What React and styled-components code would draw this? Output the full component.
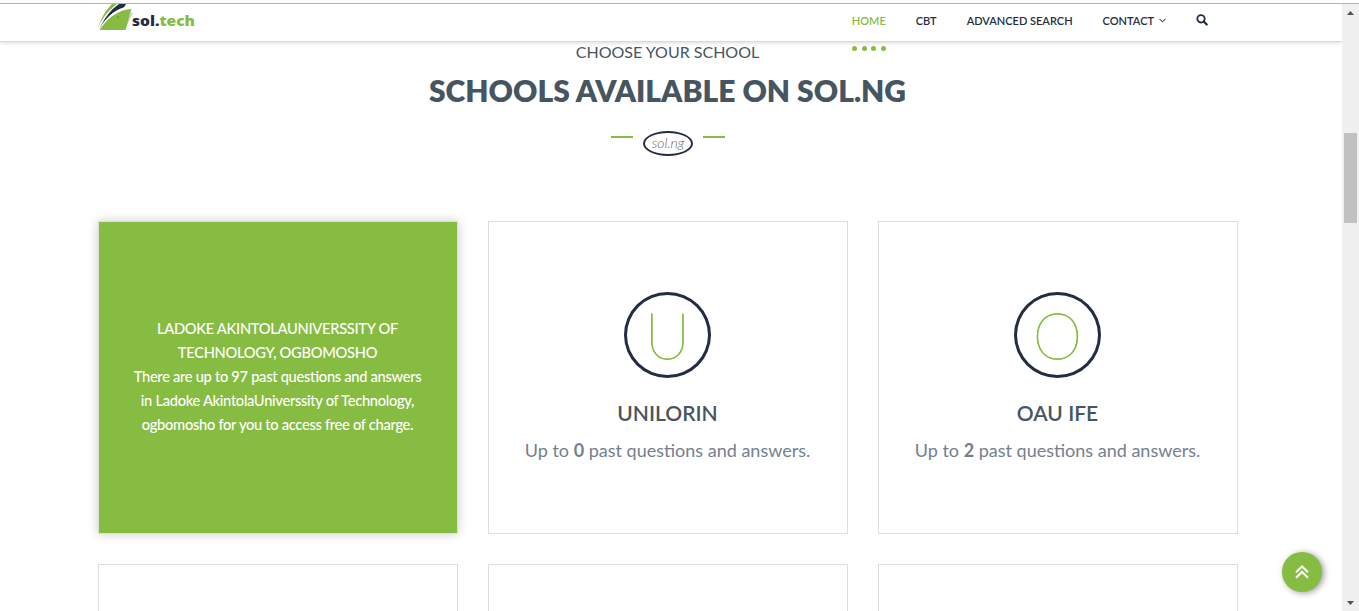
import React from 'react'
import styled, { createGlobalStyle, ThemeProvider } from 'styled-components'

const theme = {
  green: '#86bc42',
  navy: '#232c43',
  heading: '#46555f',
  text: '#74808e',
  border: '#dedede',
}

const GlobalStyle = createGlobalStyle`
  * {
    box-sizing: border-box;
  }

  body {
    margin: 0;
    overflow: hidden;
    background-color: white;
    font-family: Lato, "Liberation Sans", sans-serif;
  }
`

const Frame = styled.div`
  display: grid;
  grid-template-columns: 1fr 17px;
  height: 608px;
  border-top: 1px solid #b3b3b3;
  margin-top: 3px;
  overflow: hidden;
`

const Screen = styled.div`
  height: 607px;
  overflow: hidden;
`

const Header = styled.header`
  position: relative;
  display: flex;
  justify-content: space-between;
  height: 38px;
  padding: 0 134px 0 98px;
  border-bottom: 1px solid #d9d9d9;
  box-shadow: 0 1px 4px rgba(0, 0, 0, 0.15);
`

const Logo = styled.svg`
  display: block;
  width: 100px;
  height: 30px;
`

const Nav = styled.nav`
  display: flex;
  gap: 30px;
  height: 32px;
`

const NavLink = styled.a`
  position: relative;
  display: flex;
  align-items: center;
  color: ${props => props.$active ? props.theme.green : props.theme.navy};
  font-size: 11px;
  font-weight: 600;
  white-space: nowrap;

  svg {
    display: block;
  }
`

const Caret = styled.svg`
  margin-left: 5px;
`

const Dots = styled.span`
  position: absolute;
  top: 42px;
  left: 0;
  display: flex;
  gap: 4.7px;

  i {
    width: 5px;
    height: 5px;
    border-radius: 50%;
    background-color: ${props => props.theme.green};
  }
`

const Section = styled.section`
  width: 1140px;
  margin-left: 98px;
`

const Intro = styled.div`
  display: flex;
  flex-direction: column;
  align-items: center;
  height: 179px;
`

const Kicker = styled.p`
  margin: 0;
  padding-right: 1px;
  color: ${props => props.theme.heading};
  font-size: 16px;
  line-height: 20px;
`

const Title = styled.h2`
  margin: 10px 0 0;
  padding-right: 1px;
  color: ${props => props.theme.heading};
  font-size: 30px;
  font-weight: 800;
  line-height: 36px;
  white-space: nowrap;
`

const Divider = styled.div`
  display: flex;
  align-items: flex-start;
  gap: 10px;
  margin-top: 23px;

  &::before,
  &::after {
    width: 22px;
    height: 2px;
    margin-top: 5px;
    background-color: ${props => props.theme.green};
    content: "";
  }
`

const Badge = styled.span`
  width: 50px;
  height: 25px;
  border: 2px solid ${props => props.theme.navy};
  border-radius: 50%;
  color: #666;
  font-size: 14px;
  font-style: italic;
  font-weight: 300;
  line-height: 20px;
  text-align: center;
`

const Schools = styled.div`
  display: grid;
  grid-template-columns: repeat(3, 360px);
  grid-auto-rows: 313px;
  gap: 30px;
`

const Card = styled.article`
  display: flex;
  flex-direction: column;
  align-items: center;
  padding: 70px 1px 0 0;
  border: 1px solid ${props => props.theme.border};
  background-color: white;
`

const ActiveCard = styled(Card)`
  padding-top: 94px;
  background-color: ${props => props.theme.green};
  box-shadow: 0 0 10px rgba(0, 0, 0, 0.2);
  color: white;
  font-size: 14.7px;
  font-weight: 500;
  font-feature-settings: "liga" 1;
  letter-spacing: -0.31px;
  line-height: 24px;
  text-align: center;
  white-space: nowrap;

  p {
    margin: 0;
  }
`

const Initial = styled.div`
  width: 87px;
  height: 86px;
  border: 3px solid ${props => props.theme.navy};
  border-radius: 50%;
  color: ${props => props.theme.green};
  font-size: 63px;
  font-weight: 200;
  line-height: 79px;
  text-align: center;
  -webkit-text-stroke: 0.8px ${props => props.theme.green};
`

const SchoolName = styled.h3`
  margin: 21px 0 0;
  color: ${props => props.theme.heading};
  font-size: 21px;
  font-weight: 600;
  line-height: 28px;
`

const Summary = styled.p`
  margin: 8px 0 0;
  color: ${props => props.theme.text};
  font-size: 18px;
  line-height: 30px;
  white-space: nowrap;
`

const ToTop = styled.button`
  position: absolute;
  top: 552px;
  left: 1282px;
  display: grid;
  place-items: center;
  width: 40px;
  height: 40px;
  padding: 0;
  border: 0;
  border-radius: 50%;
  background-color: ${props => props.theme.green};
  box-shadow: 2px 1px 6px rgba(0, 0, 0, 0.4);
`

const Scrollbar = styled.div`
  display: flex;
  flex-direction: column;
  align-items: center;
  height: 607px;
  background-color: #f0f0f0;

  svg {
    display: block;
    flex: none;
  }
`

const Thumb = styled.div`
  flex: none;
  width: 13px;
  height: 90px;
  margin: 112px 0 371px;
  background-color: #c1c1c1;
`

const schools = [
  { name: 'UNILORIN', initial: 'U', count: 0 },
  { name: 'OAU IFE', initial: 'O', count: 2 },
]

const School = ({ name, initial, count }) => (
  <Card>
    <Initial>{initial}</Initial>
    <SchoolName>{name}</SchoolName>
    <Summary>Up to <b>{count}</b> past questions and answers.</Summary>
  </Card>
)

const SolLogo = () => (
  <Logo viewBox="0 0 100 30">
    <path d="M28 23 L35 9 L32 8Z" fill="#cfd1d4" />
    <path d="M0 24 C3 14 8 6 14 0 L19 0 C11 6 4 14 0 24Z" fill="#86bc42" />
    <path d="M1.5 25 C6 15 12 6 21 0 L28 0 L26 3.5 C16 7 8 14 1.5 25Z" fill="#232c43" />
    <path d="M2 25 C7 15 15 7 27 3.5" fill="none" stroke="white" strokeWidth="1" />
    <path d="M1.5 26 C8 16 18 6 33.5 5 C31 11 30 19 27.5 26Z" fill="#86bc42" />
    <circle cx="20" cy="13" r="0.6" fill="#232c43" />
    <text x="34" y="22" fontFamily="Open Sans, Noto Sans, sans-serif" fontSize="14" fontWeight="800" textLength="63" lengthAdjust="spacingAndGlyphs" fill="#232c43">
      sol.<tspan fill="#86bc42">tech</tspan>
    </text>
  </Logo>
)

export default () => (
  <ThemeProvider theme={theme}>
    <GlobalStyle />
    <Frame>
      <Screen>
        <Header>
          <SolLogo />
          <Nav>
            <NavLink $active>HOME<Dots><i /><i /><i /><i /></Dots></NavLink>
            <NavLink>CBT</NavLink>
            <NavLink>ADVANCED SEARCH</NavLink>
            <NavLink>
              CONTACT
              <Caret width="7" height="5" viewBox="0 0 7 5">
                <path d="M0.5 0.8 L3.5 3.8 L6.5 0.8" fill="none" stroke="#4d566b" strokeWidth="1.1" />
              </Caret>
            </NavLink>
            <NavLink>
              <svg width="12" height="12" viewBox="0 0 12 12" fill="none" stroke="#232c43">
                <circle cx="5" cy="4.8" r="3.7" strokeWidth="1.8" />
                <path d="M7.7 7.5 L10.7 10.5" strokeWidth="2.2" strokeLinecap="round" />
              </svg>
            </NavLink>
          </Nav>
        </Header>
        <Section>
          <Intro>
            <Kicker>CHOOSE YOUR SCHOOL</Kicker>
            <Title>SCHOOLS AVAILABLE ON SOL.NG</Title>
            <Divider><Badge>sol.ng</Badge></Divider>
          </Intro>
          <Schools>
            <ActiveCard>
              <p>LADOKE AKINTOLAUNIVERSSITY OF<br />TECHNOLOGY, OGBOMOSHO</p>
              <p>There are up to 97 past questions and answers<br />in Ladoke AkintolaUniverssity of Technology,<br />ogbomosho for you to access free of charge.</p>
            </ActiveCard>
            {schools.map(school => <School key={school.name} {...school} />)}
            <Card />
            <Card />
            <Card />
          </Schools>
        </Section>
      </Screen>
      <Scrollbar>
        <svg width="17" height="17" viewBox="0 0 17 17">
          <path d="M5 11 L8.5 7 L12 11Z" fill="#505050" />
        </svg>
        <Thumb />
        <svg width="17" height="17" viewBox="0 0 17 17">
          <path d="M5 7 L12 7 L8.5 11Z" fill="#505050" />
        </svg>
      </Scrollbar>
    </Frame>
    <ToTop aria-label="Back to top">
      <svg width="14" height="14" viewBox="0 0 14 14" fill="none" stroke="white" strokeWidth="2">
        <path d="M1 7.2 L7 1.5 L13 7.2 M1 12.7 L7 7 L13 12.7" />
      </svg>
    </ToTop>
  </ThemeProvider>
)
